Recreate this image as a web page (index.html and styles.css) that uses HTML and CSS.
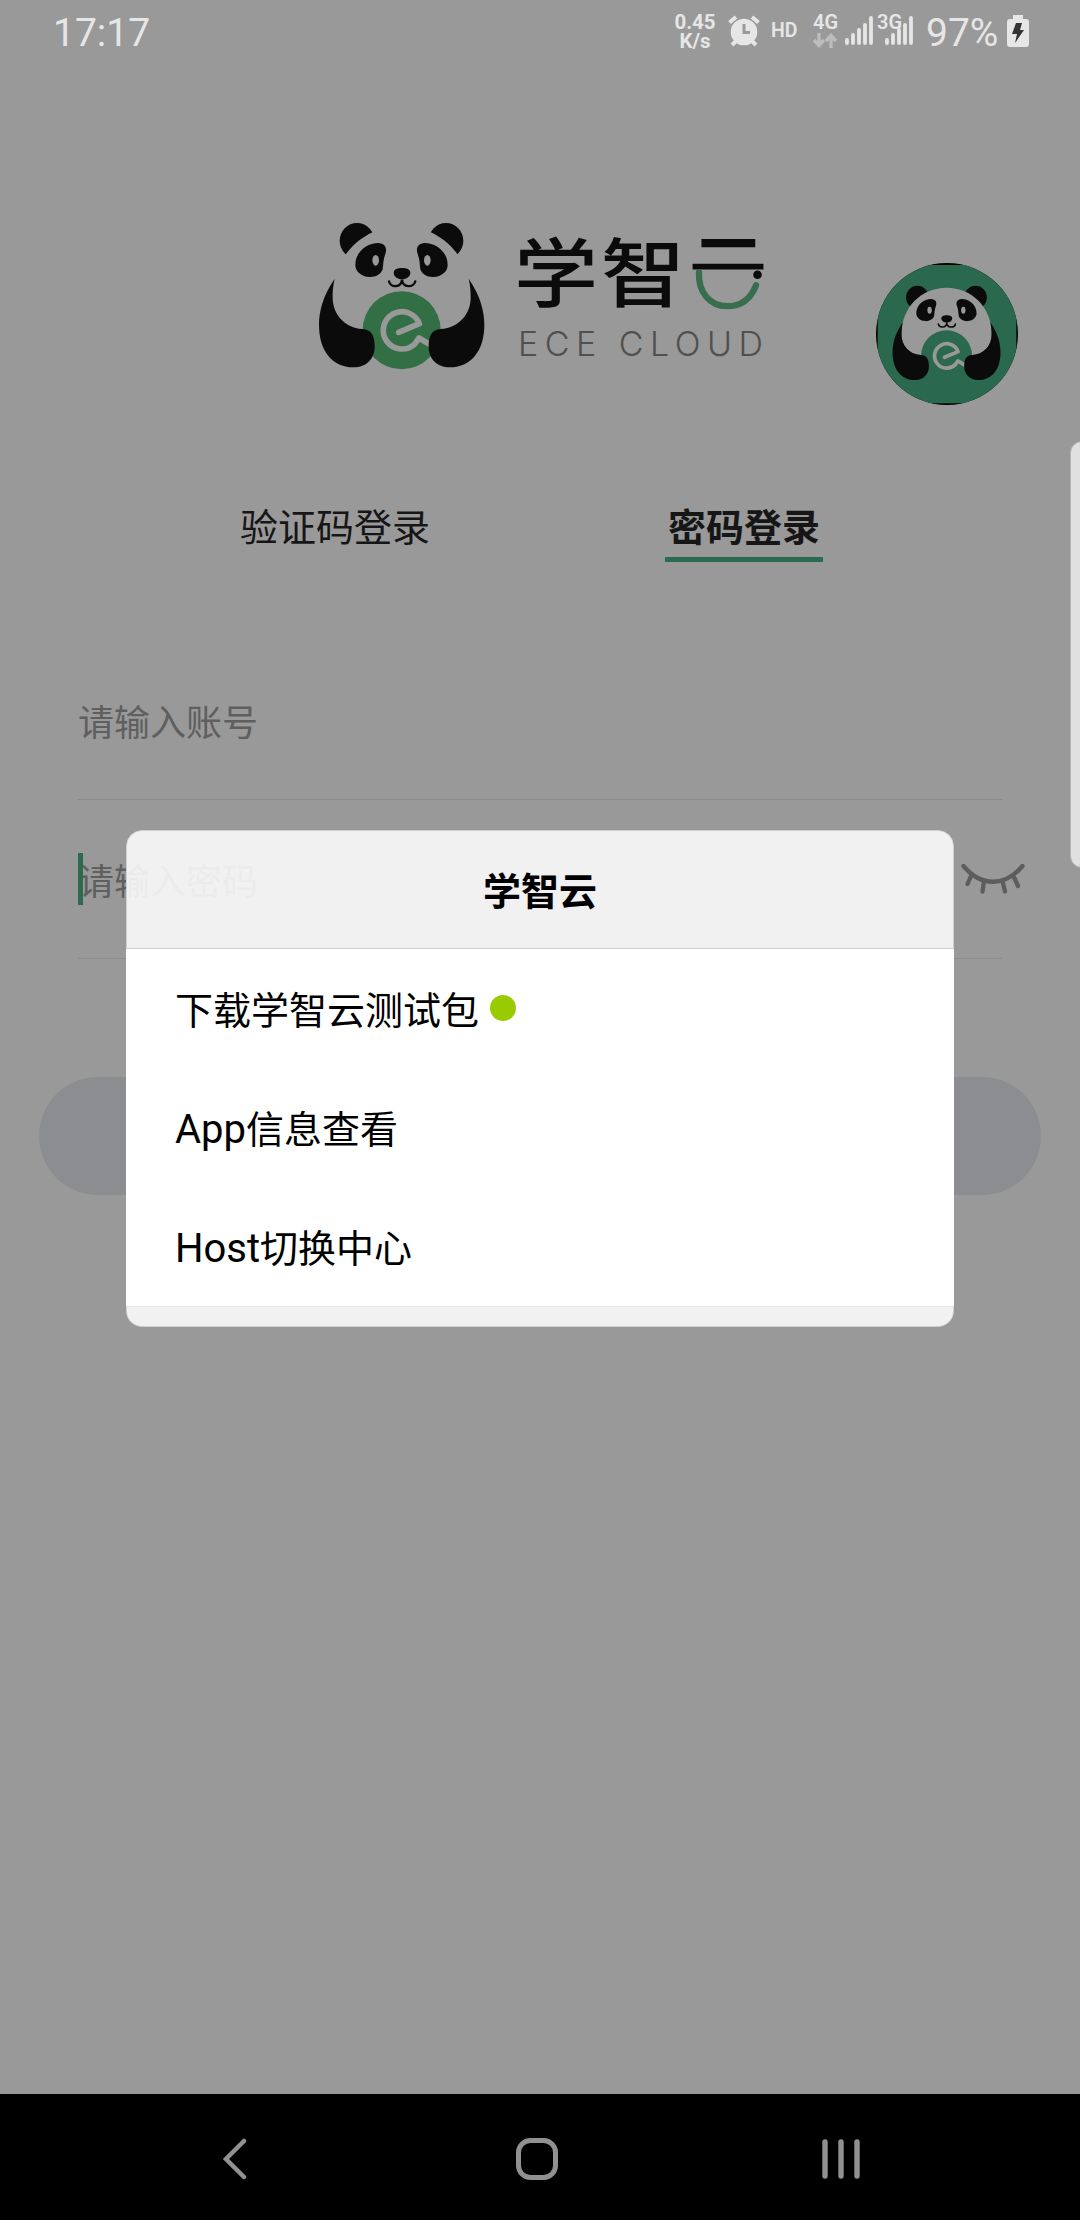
FILE: index.html
```html
<!DOCTYPE html>
<html lang="zh-CN">
<head>
<meta charset="utf-8">
<title>学智云</title>
<link rel="stylesheet" href="styles.css">
</head>
<body>
<svg width="0" height="0" class="defs">
  <symbol id="panda" viewBox="0 0 630 570">
    <ellipse cx="171" cy="122" rx="52" ry="53" fill="#0b0b0b"/>
    <ellipse cx="438" cy="122" rx="52" ry="53" fill="#0b0b0b"/>
    <path fill="#999" d="M98 290C98 168 190 78 305 78S512 168 512 290C512 340 480 388 420 388H190C130 388 98 340 98 290Z"/>
    <g id="eye">
      <path fill="#0b0b0b" d="M166 195C166 155 200 130 235 129C256 130 262 145 256 162C249 180 250 195 248 208C242 225 225 232 208 231C185 230 166 215 166 195Z"/>
      <ellipse cx="227" cy="181" rx="10" ry="16" fill="#999"/>
    </g>
    <use href="#eye" transform="matrix(-1 0 0 1 609 0)"/>
    <path fill="#0b0b0b" d="M281 219C281 207 293 204 306 204S331 207 331 219C331 229 319 238 306 238S281 229 281 219Z"/>
    <path fill="none" stroke="#0b0b0b" stroke-width="7" stroke-linecap="round" d="M267 244C271 264 304 264 306 239C308 264 341 264 346 244"/>
    <circle cx="305" cy="390.500" r="117" fill="currentColor"/>
    <path fill="none" stroke="#999" stroke-width="17" stroke-linecap="round" stroke-linejoin="round" d="M296 397L358 371A56 56 0 1 0 345 431L357 414L390 434"/>
    <g id="arm">
      <path fill="#0b0b0b" d="M104 236C68 288 57 335 57 375C57 450 95 502 160 502C200 502 224 475 224 440C224 408 215 388 188 387C130 382 97 340 98 290C98 265 101 250 104 236Z"/>
    </g>
    <use href="#arm" transform="matrix(-1 0 0 1 610 0)"/>
  </symbol>
</svg>

<div class="phone">
  <header class="status">
    <span class="clock">17:17</span>
    <span class="rate">0.45<br>K/s</span>
    <svg class="alarm" width="32" height="32" viewBox="0 0 32 32">
      <path d="M1.500 7.500L8 2M30.500 7.500L24 2M8 26L4 30M24 26L28 30" stroke="#e6e6e6" stroke-width="4" fill="none"/>
      <circle cx="16" cy="17" r="13.300" fill="#e6e6e6"/>
      <path d="M16 9V17.500H22" stroke="#999" stroke-width="3" fill="none"/>
    </svg>
    <span class="hd">HD</span>
    <span class="net">
      <span>4G</span>
      <svg width="24" height="15" viewBox="0 0 24 15"><path d="M6 0V12M1 7L6 12.500L11 7M18 15V3M13 8L18 2.500L23 8" stroke="#bdbdbd" stroke-width="3.400" fill="none"/></svg>
    </span>
    <svg class="bars" width="29" height="30" viewBox="0 0 29 30"><path d="M2 24V27M8 19V27M14 14V27M20 9V27M26 2V27" stroke="#e6e6e6" stroke-width="3.800" stroke-linecap="round"/></svg>
    <span class="second">
      <b>3G</b>
      <svg width="29" height="30" viewBox="0 0 29 30"><path d="M2 24V27M8 19V27M14 14V27M20 9V27M26 2V27" stroke="#e6e6e6" stroke-width="3.800" stroke-linecap="round"/></svg>
    </span>
    <span class="percent">97%</span>
    <svg class="battery" width="22" height="32" viewBox="0 0 22 32">
      <path fill="#e6e6e6" d="M6 0H16V4H19Q22 4 22 7V29Q22 32 19 32H3Q0 32 0 29V7Q0 4 3 4H6Z"/>
      <path fill="#333" d="M9 8H15L13 15H17L8 28L10 19H5Z"/>
    </svg>
  </header>

  <main class="login">
    <section class="brand">
      <svg class="mascot" width="210" height="190"><use href="#panda"/></svg>
      <div class="wordmark">
        <div class="name"><span>学</span><span>智</span><span class="cloud"><i>云</i>
          <svg class="smile" width="72" height="48" viewBox="0 0 72 48"><path d="M8 7C7 27 19 41 36 41C51 41 60 33 65 20" fill="none" stroke="#386e4e" stroke-width="6.300" stroke-linecap="round"/><circle cx="66.500" cy="9.500" r="4.300" fill="#0b0b0b"/></svg>
        </span></div>
        <div class="latin">ECE CLOUD</div>
      </div>
      <svg class="avatar" width="142" height="142" viewBox="0 0 426 426">
        <defs><clipPath id="disc"><circle cx="213" cy="213" r="213"/></clipPath></defs>
        <g clip-path="url(#disc)"><path fill="#000" d="M0 0H426V426H0Z"/><rect x="5" y="6" width="416" height="415" fill="#2a694e"/></g>
        <use href="#panda" x="12.500" y="23.500" width="411.400" height="372.200"/>
      </svg>
    </section>

    <nav class="tabs">
      <span class="tab">验证码登录</span>
      <span class="tab active">密码登录</span>
    </nav>

    <form class="fields">
      <div class="field"><span>请输入账号</span></div>
      <div class="field password">
        <i class="caret"></i><span>请输入密码</span>
        <svg class="shut" width="64" height="32" viewBox="0 0 64 32"><path d="M2.500 3C20 24 44 24 61.500 3M10 13L6.500 21M23 18L21.500 28.500M41.500 18L44 28.500M52.500 13L57 23" fill="none" stroke="#5d5d5d" stroke-width="4.300" stroke-linecap="round"/></svg>
      </div>
      <div class="submit"></div>
    </form>
  </main>

  <footer class="navbar">
    <svg width="26" height="42" viewBox="0 0 26 42"><path d="M22 3L4 21L22 39" fill="none" stroke="#919191" stroke-width="4.500" stroke-linecap="round"/></svg>
    <svg class="home" width="42" height="42" viewBox="0 0 42 42"><rect x="2.500" y="2.500" width="37" height="37" rx="12" fill="none" stroke="#919191" stroke-width="5"/></svg>
    <svg width="38" height="42" viewBox="0 0 38 42"><path d="M3 4V38M19 4V38M35 4V38" fill="none" stroke="#919191" stroke-width="5.400" stroke-linecap="round"/></svg>
  </footer>

  <div class="edge"></div>

  <div class="dialog">
    <div class="title">学智云</div>
    <ul class="menu">
      <li>下载学智云测试包<i class="dot"></i></li>
      <li><span class="en">App</span>信息查看</li>
      <li><span class="en">Host</span>切换中心</li>
    </ul>
    <div class="foot"></div>
  </div>
</div>
</body>
</html>
```
FILE: styles.css
```css
* { box-sizing: border-box; }
body { margin: 0; background: #999; font-family: Roboto, "Noto Sans CJK SC", sans-serif; }
i { font-style: normal; }
svg { display: block; flex: none; }
.defs { position: absolute; }
.phone { position: relative; width: 1080px; height: 2220px; background: #999; display: flex; flex-direction: column; overflow: hidden; }

.status { height: 64px; padding-left: 53px; display: flex; align-items: flex-start; color: #e6e6e6; white-space: nowrap; }
.clock, .percent { font-size: 39px; line-height: 46px; margin-top: 10px; }
.clock { width: 620px; }
.rate { width: 44px; text-align: center; font-size: 20.5px; font-weight: 700; line-height: 19px; margin-top: 13px; }
.alarm { margin: 15px 0 0 11px; }
.hd { width: 41px; padding-left: 11px; font-size: 19.5px; font-weight: 600; line-height: 22px; margin-top: 20px; }
.net { width: 44px; padding-left: 12px; padding-top: 11px; font-size: 20px; font-weight: 600; line-height: 22px; }
.bars { margin-top: 16px; }
.second { position: relative; padding: 16px 0 0 11px; }
.second b { position: absolute; left: 3px; top: 11px; font-size: 20px; font-weight: 600; line-height: 22px; }
.percent { width: 81px; margin-left: 12px; margin-right: -1px; }
.battery { margin: 15px 0 0 1px; }

.login { flex: 1; }
.brand { height: 406px; padding: 136px 0 0 300px; display: flex; align-items: flex-start; }
.mascot { color: #326f45; }
.wordmark { width: 366px; padding: 27px 0 0 4px; }
.name { height: 98px; display: flex; font-size: 84px; line-height: 98px; font-weight: 500; color: #0b0b0b; transform: scaleY(.89); }
.name span { width: 87px; }
.name .cloud { position: relative; }
.cloud i { display: block; clip-path: inset(0 0 57px 0); transform: translateX(-2px) scale(.94, 1.15); transform-origin: 40px 37px; }
.smile { position: absolute; left: 3px; top: 37px; transform: scaleY(1.12); transform-origin: top; }
.latin { margin: -1px 0 0 4px; font-family: Inter, "Liberation Sans", sans-serif; font-weight: 300; font-size: 34px; line-height: 40px; letter-spacing: 6.5px; color: #505050; white-space: nowrap; }
.avatar { margin-top: 63px; color: #2a694e; }

.tabs { height: 92px; padding-top: 31px; display: flex; font-size: 38px; line-height: 54px; color: #161616; }
.tab { margin-left: 240px; width: 190px; height: 61px; text-align: center; white-space: nowrap; }
.tab.active { margin-left: 235px; width: 158px; font-weight: 700; border-bottom: 5px solid #2c6b50; }

.fields { padding: 79px 39px 0; font-size: 36px; color: #5f5f5f; }
.field { margin: 0 39px; height: 159px; padding-top: 57px; line-height: 52px; border-bottom: 1px solid #8b8b8b; display: flex; }
.password { position: relative; }
.caret { position: absolute; left: 0; top: 53px; width: 5px; height: 52px; background: #2c6b50; }
.shut { position: absolute; left: 883px; top: 63px; }
.submit { height: 118px; margin-top: 118px; border-radius: 59px; background: #8b8d90; }

.navbar { height: 126px; padding: 44px 220px 0 222px; background: #000; display: flex; justify-content: space-between; }
.home { margin-left: 4px; }

.edge { position: absolute; left: 1070px; top: 441px; width: 24px; height: 427px; border: 1px solid #b5b5b5; border-radius: 14px; background: #e0e0e0; }

.dialog { position: absolute; left: 126px; top: 830px; width: 828px; border-radius: 16px; overflow: hidden; color: #000; }
.title { height: 119px; line-height: 122px; text-align: center; font-size: 38px; font-weight: 700; background: rgba(251, 251, 251, .9); border: 1px solid #d0d0d0; border-radius: 16px 16px 0 0; }
.menu { margin: 0; padding: 0; list-style: none; background: #fff; }
.menu li { height: 119px; padding: 4px 0 0 49px; line-height: 117px; font-size: 38px; }
.en { font-size: 40px; line-height: 1; }
.dot { display: inline-block; width: 26px; height: 26px; margin: 0 0 0 11px; vertical-align: 3px; border-radius: 50%; background: #9c0; }
.foot { height: 21px; background: #f1f1f1; border: 1px solid #d0d0d0; border-top: 1px solid #e8e8e8; border-radius: 0 0 16px 16px; }
```
